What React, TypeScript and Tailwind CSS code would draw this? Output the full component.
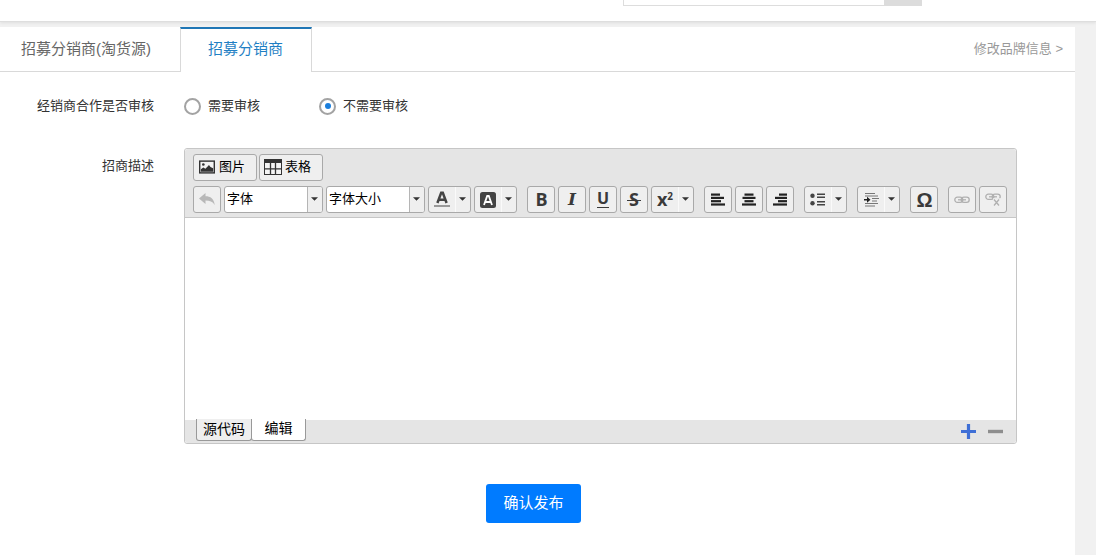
import { useState, type ReactNode } from 'react'
import clsx from 'clsx'

const buttonBase = 'flex h-[27px] shrink-0 rounded-[3px] border border-[#a9a9a9] bg-[#efefef]'

function Caret() {
  return (
    <svg className="mr-px mb-0.5 block" width="7" height="4" viewBox="0 0 7 4">
      <path d="M0 .2h7L3.5 3.8z" fill="#333" />
    </svg>
  )
}

function ToolButton({ title, children }: { title: string; children: ReactNode }) {
  return (
    <button title={title} className={clsx(buttonBase, 'w-7 items-center justify-center')}>
      {children}
    </button>
  )
}

function SplitButton({ title, children }: { title: string; children: ReactNode }) {
  return (
    <button title={title} className={clsx(buttonBase, 'w-[43px]')}>
      <span className="flex h-full w-[26px] items-center justify-center">{children}</span>
      <span className="flex h-full w-[15px] items-center justify-center border-l border-[#fafafa] pr-px">
        <Caret />
      </span>
    </button>
  )
}

function Combo({ label }: { label: string }) {
  return (
    <button className="flex h-[27px] w-[99px] shrink-0 overflow-hidden rounded-[3px] border border-[#a9a9a9] bg-white text-[13px] text-black">
      <span className="flex h-full w-[82px] items-center pb-px pl-0.5">{label}</span>
      <span className="flex h-full w-[15px] items-center justify-center border-l border-[#b5b5b5] bg-[#efefef] pr-px">
        <Caret />
      </span>
    </button>
  )
}

function Group({ children }: { children: ReactNode }) {
  return <div className="flex gap-[3px]">{children}</div>
}

const alignWidths = {
  left: [9, 13, 10, 14],
  center: [9, 13, 9, 14],
  right: [8, 12, 9, 14],
}

function AlignIcon({ align }: { align: 'left' | 'center' | 'right' }) {
  return (
    <svg width="14" height="13" viewBox="0 0 14 13" fill="#222">
      {alignWidths[align].map((width, i) => {
        const x = align === 'left' ? 0 : align === 'right' ? 14 - width : (14 - width) / 2
        return <rect key={i} x={x} y={0.5 + i * 3.3} width={width} height="2.2" />
      })}
    </svg>
  )
}

function LinkShape() {
  return (
    <>
      <rect x="0.8" y="2.2" width="8" height="5.2" rx="2.6" />
      <rect x="7.2" y="2.2" width="8" height="5.2" rx="2.6" />
      <path d="M4 4.8h8" />
    </>
  )
}

function Toolbar() {
  return (
    <div className="h-[69px] rounded-t-[3px] border-b border-[#c6c6c6] bg-[#e5e5e5] px-2 pt-[5px]">
      <div className="flex gap-0.5 text-[13px] text-black">
        <button className={clsx(buttonBase, 'w-16 items-center gap-1 pb-px pl-[5px]')}>
          <svg width="16" height="14" viewBox="0 0 17 14">
            <rect x="0.75" y="0.75" width="15.5" height="12.5" fill="#f4f4f4" stroke="#333" strokeWidth="1.5" />
            <circle cx="4.6" cy="4.4" r="1.4" fill="#333" />
            <path d="M2 12V9.4l2.6-2 2.2 1.4L10.6 5l1.6 2 2.8 1.2V12z" fill="#333" />
          </svg>
          图片
        </button>
        <button className={clsx(buttonBase, 'w-16 items-center gap-[3px] pb-px pl-1')}>
          <svg width="18" height="16" viewBox="0 0 18 16">
            <rect x="0.5" y="0.5" width="17" height="15" fill="#f4f4f4" stroke="#333" />
            <path d="M0 0h18v4H0z" fill="#333" />
            <path d="M6.5 4v12M11.5 4v12M0 9.8h18" stroke="#333" strokeWidth="1.3" />
          </svg>
          表格
        </button>
      </div>

      <div className="mt-[5px] flex gap-2.5">
        <Group>
          <ToolButton title="撤销">
            <svg width="16" height="13" viewBox="0 0 16 13">
              <path d="M0 5.5 6.5 0v3.2c5 0 8.5 2.4 9.2 8.8-2-3.2-4.8-4.4-9.2-4.4v3.4z" fill="#b8b8b8" />
            </svg>
          </ToolButton>
          <Combo label="字体" />
          <Combo label="字体大小" />
          <SplitButton title="文字颜色">
            <svg width="16" height="17" viewBox="0 0 16 17">
              <path d="M3.4 12 7.2 1.8h1.6L12.6 12M5 8.8h6" fill="none" stroke="#444" strokeWidth="2.5" />
              <path d="M0 14h16v2H0z" fill="#999" />
            </svg>
          </SplitButton>
          <SplitButton title="背景颜色">
            <svg width="16" height="16" viewBox="0 0 16 16">
              <rect width="16" height="16" rx="2.5" fill="#444" />
              <path d="M4 13 7.2 4h1.6L12 13M5.5 10h5" fill="none" stroke="#fff" strokeWidth="1.8" />
            </svg>
          </SplitButton>
        </Group>

        <Group>
          <ToolButton title="加粗">
            <span className="mb-0.5 ml-px font-['Open_Sans',sans-serif] text-[18px] leading-none font-bold text-[#3a3a3a]">
              B
            </span>
          </ToolButton>
          <ToolButton title="斜体">
            <span className="font-['DejaVu_Serif',serif] text-[17px] leading-none font-bold text-[#3a3a3a] italic">I</span>
          </ToolButton>
          <ToolButton title="下划线">
            <span className="flex h-[17px] w-3 items-center justify-center border-b border-[#3a3a3a] pb-0.5 font-['Open_Sans',sans-serif] text-base leading-none font-bold text-[#3a3a3a]">
              U
            </span>
          </ToolButton>
          <ToolButton title="删除线">
            <span className="mb-0.5 bg-[linear-gradient(#3a3a3a,#3a3a3a)] bg-[length:100%_1px] bg-[position:0_10px] bg-no-repeat px-0.5 font-['Open_Sans',sans-serif] text-[18px] leading-[18px] font-bold text-[#3a3a3a]">
              S
            </span>
          </ToolButton>
          <SplitButton title="上标">
            <span className="mb-0.5 flex font-['Open_Sans',sans-serif] text-[18px] leading-none font-bold text-[#3a3a3a]">
              x<span className="text-[10px] leading-[13px]">2</span>
            </span>
          </SplitButton>
        </Group>

        <Group>
          <ToolButton title="左对齐">
            <AlignIcon align="left" />
          </ToolButton>
          <ToolButton title="居中">
            <AlignIcon align="center" />
          </ToolButton>
          <ToolButton title="右对齐">
            <AlignIcon align="right" />
          </ToolButton>
        </Group>

        <SplitButton title="列表">
          <svg className="mr-px" width="15" height="13" viewBox="0 0 15 13" fill="#444">
            <circle cx="2.5" cy="2.7" r="2.2" />
            <circle cx="2.5" cy="10.2" r="2.2" />
            <path d="M7 .5h8V2H7zM7 3.5h8V5H7zM7 8h8v1.5H7zM7 11h8v1.5H7z" />
          </svg>
        </SplitButton>

        <SplitButton title="缩进">
          <svg className="ml-0.5" width="16" height="15" viewBox="0 0 16 15">
            <path d="M1 1.5h10M1 4h13M8 6.5h7M8 9h5M1 11.5h13M1 14h10" stroke="#777" />
            <path d="M0 7h3V4.8l3.5 3-3.5 3V8.5H0z" fill="#222" />
          </svg>
        </SplitButton>

        <ToolButton title="特殊字符">
          <span className="ml-px font-['Liberation_Sans',sans-serif] text-[20px] leading-none font-bold text-[#3a3a3a]">Ω</span>
        </ToolButton>

        <Group>
          <ToolButton title="插入链接">
            <svg width="16" height="10" viewBox="0 0 16 10" fill="none" stroke="#b0b0b0" strokeWidth="1.3">
              <LinkShape />
            </svg>
          </ToolButton>
          <ToolButton title="取消链接">
            <svg width="16" height="15" viewBox="0 0 16 15" fill="none" stroke="#b0b0b0" strokeWidth="1.3">
              <LinkShape />
              <path d="M8 6.2h8V14H8z" fill="#efefef" stroke="none" />
              <path d="m9 7.5 5 6M14 7.5l-5 6" />
            </svg>
          </ToolButton>
        </Group>
      </div>
    </div>
  )
}

function Editor() {
  return (
    <div className="flex h-[296px] w-[833px] flex-col rounded-[3px] border border-[#c6c6c6] bg-white">
      <Toolbar />
      <div className="flex-1" />
      <div className="flex h-[23px] justify-between rounded-b-[3px] bg-[#e5e5e5]">
        <div className="-mt-px ml-[11px] flex text-sm text-black">
          <button className="flex h-[22px] w-14 items-center justify-center rounded-b-[3px] border border-t-0 border-[#999] bg-[#efefef] pb-0.5">
            源代码
          </button>
          <button className="-ml-px flex h-[22px] w-[55px] items-center justify-center rounded-b-[3px] border border-t-0 border-[#999] bg-white pb-1">
            编辑
          </button>
        </div>
        <div className="mr-[13px] flex items-center gap-3">
          <svg width="15" height="15" viewBox="0 0 15 15">
            <path d="M7.5 0v15M0 7.5h15" stroke="#3f6fd6" strokeWidth="3.2" />
          </svg>
          <svg width="15" height="15" viewBox="0 0 15 15">
            <path d="M0 7.5h15" stroke="#8e8e8e" strokeWidth="3.4" />
          </svg>
        </div>
      </div>
    </div>
  )
}

interface RadioProps {
  label: string
  checked: boolean
  onSelect: () => void
}

function Radio({ label, checked, onSelect }: RadioProps) {
  return (
    <button role="radio" aria-checked={checked} onClick={onSelect} className="flex items-center gap-[7px]">
      <span className="flex size-[17px] items-center justify-center rounded-full border-2 border-[#a3a3a3] bg-white">
        {checked && <span className="size-1.5 rounded-full bg-[#1c7fdc]" />}
      </span>
      {label}
    </button>
  )
}

export default function App() {
  const [needReview, setNeedReview] = useState(false)

  return (
    <div className="h-[555px] overflow-hidden bg-[#f1f1f1] font-['Liberation_Sans','Noto_Sans_CJK_SC',sans-serif] text-[13px] text-[#333]">
      {/* Bottom edge of the site header with its search box */}
      <header className="mb-[5px] flex h-[22px] items-start border-b border-[#dedede] bg-white pl-[623px] shadow-[0_1px_3px_rgba(0,0,0,0.08)]">
        <div className="h-1.5 w-[261px] border border-t-0 border-r-0 border-[#ddd]" />
        <div className="h-1.5 w-[38px] bg-[#dcdcdc]" />
      </header>

      <main className="h-[528px] w-[1075px] bg-white">
        <nav className="flex h-[45px] text-[15px]">
          <button className="w-[180px] border-b border-[#d9d9d9] pl-[21px] text-left text-[#666]">招募分销商(淘货源)</button>
          <button className="w-[132px] border-x border-t-2 border-x-[#d9d9d9] border-t-[#1f76b5] pr-px pb-0.5 text-[#1f7fc4]">
            招募分销商
          </button>
          <div className="flex flex-1 items-center justify-end border-b border-[#d9d9d9] pr-3 pb-px text-[13px] text-[#999]">
            <a>修改品牌信息 &gt;</a>
          </div>
        </nav>

        <div className="mt-[23px] flex h-[22px] items-center">
          <span className="w-[154px] text-right">经销商合作是否审核</span>
          <div role="radiogroup" className="ml-[30px] flex">
            <div className="w-[135px]">
              <Radio label="需要审核" checked={needReview} onSelect={() => setNeedReview(true)} />
            </div>
            <Radio label="不需要审核" checked={!needReview} onSelect={() => setNeedReview(false)} />
          </div>
        </div>

        <div className="mt-[31px] flex gap-[30px]">
          <span className="w-[154px] pt-2 text-right">招商描述</span>
          <Editor />
        </div>

        <button className="mt-10 ml-[486px] h-[39px] w-[95px] rounded-[3px] bg-[#007bff] text-[15px] text-white">
          确认发布
        </button>
      </main>
    </div>
  )
}
